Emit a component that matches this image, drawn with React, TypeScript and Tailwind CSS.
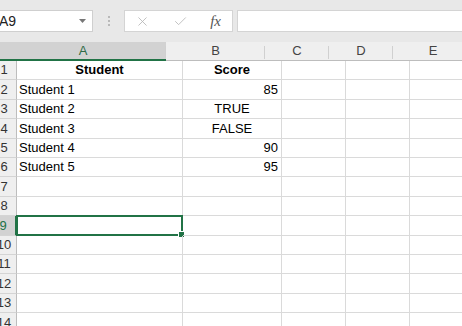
import React from 'react';
import { X, Check } from 'lucide-react';

const cols = [
  { name: 'A', w: 'w-[166px]' },
  { name: 'B', w: 'w-[99px]' },
  { name: 'C', w: 'w-[64px]' },
  { name: 'D', w: 'w-[64px]' },
  { name: 'E', w: 'w-[80px]' },
];

type Cell = { text: string; align?: 'left' | 'center' | 'right'; bold?: boolean };

const data: Record<number, [Cell?, Cell?]> = {
  1: [{ text: 'Student', align: 'center', bold: true }, { text: 'Score', align: 'center', bold: true }],
  2: [{ text: 'Student 1' }, { text: '85', align: 'right' }],
  3: [{ text: 'Student 2' }, { text: 'TRUE', align: 'center' }],
  4: [{ text: 'Student 3' }, { text: 'FALSE', align: 'center' }],
  5: [{ text: 'Student 4' }, { text: '90', align: 'right' }],
  6: [{ text: 'Student 5' }, { text: '95', align: 'right' }],
};

const alignClass = (a?: string) =>
  a === 'center' ? 'justify-center' : a === 'right' ? 'justify-end pr-[3px]' : 'justify-start pl-[2px]';

const rows = Array.from({ length: 14 }, (_, i) => i + 1);

export default function App() {
  return (
    <div
      className="w-[462px] h-[326px] overflow-hidden bg-white text-[13px] text-black"
      style={{ fontFamily: '"Liberation Sans", Arial, sans-serif' }}
    >
      {/* formula bar strip */}
      <div className="h-[42px] bg-[#e8e8e8] flex items-start pt-[10px]">
        <div className="w-[93px] h-[22px] bg-white border-y border-r border-[#cfcfcf] flex items-center justify-between pr-[6px] overflow-hidden">
          <span className="-ml-[1px] text-[#222] text-[14px]">A9</span>
          <svg width="7" height="4" viewBox="0 0 7 4">
            <path d="M0 0 L7 0 L3.5 4 Z" fill="#777" />
          </svg>
        </div>
        <div className="w-[31px] h-[22px] flex flex-col items-center justify-center gap-[2px]">
          <span className="w-[2px] h-[2px] bg-[#aaa] rounded-full" />
          <span className="w-[2px] h-[2px] bg-[#aaa] rounded-full" />
          <span className="w-[2px] h-[2px] bg-[#aaa] rounded-full" />
        </div>
        <div className="w-[109px] h-[22px] bg-white border border-[#d4d4d4] flex items-center justify-between pl-[10px] pr-[11px]">
          <X size={15} strokeWidth={1.3} color="#b4b4b4" />
          <Check size={15} strokeWidth={1.3} color="#b4b4b4" />
          <span className="italic text-[15px] text-[#555]" style={{ fontFamily: '"Liberation Serif", serif' }}>
            fx
          </span>
        </div>
        <div className="ml-[4px] flex-1 h-[22px] bg-white border-y border-l border-[#d4d4d4]" />
      </div>

      {/* column headers */}
      <div className="flex h-[19px] bg-[#e8e8e8]">
        <div className="w-[17px] h-full relative border-b border-[#bdbdbd]">
          <svg className="absolute left-[1px] bottom-[2px]" width="14" height="14" viewBox="0 0 14 14">
            <path d="M14 0 L14 14 L0 14 Z" fill="#c9c9c9" />
          </svg>
        </div>
        {cols.map((c, i) => (
          <div
            key={c.name}
            className={`${c.w} shrink-0 h-full flex items-center justify-center relative ${
              i === 0
                ? 'bg-[#d2d2d2] text-[#2f6b47] border-b-2 border-[#217346]'
                : 'bg-[#efefef] text-[#444] border-b border-[#bdbdbd]'
            }`}
          >
            {c.name}
            <span className="absolute right-0 top-[4px] bottom-[1px] w-px bg-[#d0d0d0]" />
          </div>
        ))}
      </div>

      {/* rows */}
      {rows.map((r) => {
        const selected = r === 9;
        const cells = data[r] ?? [];
        return (
          <div key={r} className="flex h-[19.4px]">
            <div
              className={`w-[17px] shrink-0 h-full flex justify-end overflow-hidden border-b border-[#d4d4d4] ${
                selected ? 'bg-[#d2d2d2] text-[#217346] border-r-2 border-r-[#217346]' : 'bg-[#efefef] text-[#333] border-r border-r-[#bdbdbd]'
              }`}
            >
              <div className="w-[24px] shrink-0 flex items-center justify-center text-[13px]">{r}</div>
            </div>
            {cols.map((c, ci) => {
              const cell = ci < 2 ? cells[ci as 0 | 1] : undefined;
              return (
                <div
                  key={c.name}
                  className={`${c.w} shrink-0 h-full flex items-center whitespace-nowrap border-r border-b border-[#dadada] relative ${alignClass(
                    cell?.align
                  )} ${cell?.bold ? 'font-bold' : ''}`}
                >
                  {cell?.text}
                  {selected && ci === 0 && (
                    <>
                      <span className="absolute -left-px -top-px -right-px -bottom-px border-2 border-[#217346]" />
                      <span className="absolute -right-[3px] -bottom-[3px] w-[5px] h-[5px] bg-[#217346] border border-white box-content" />
                    </>
                  )}
                </div>
              );
            })}
          </div>
        );
      })}
    </div>
  );
}
